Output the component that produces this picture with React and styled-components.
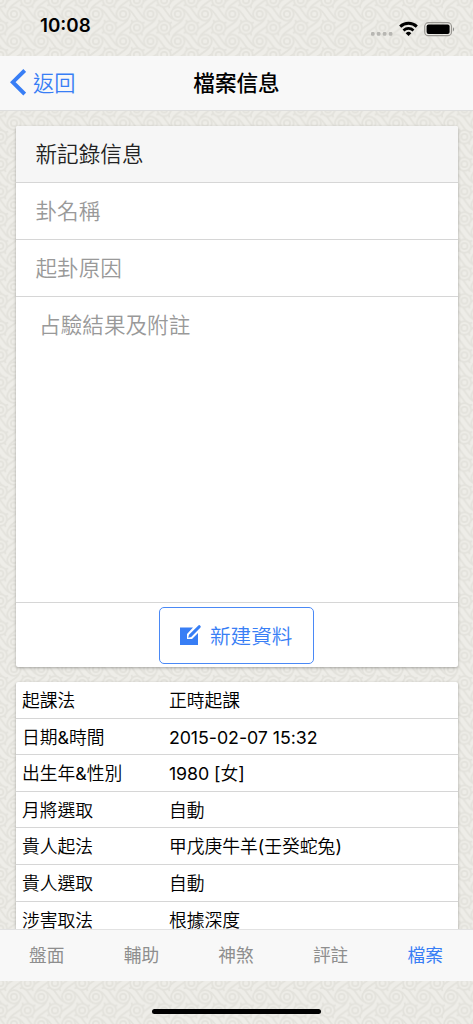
import React from 'react';
import styled, { createGlobalStyle } from 'styled-components';

const Global = createGlobalStyle`
  *{box-sizing:border-box}
  html,body{margin:0;height:100%}
  body{font-family:Inter,"Noto Sans CJK TC",sans-serif;background:#ecebe6;color:#000}
  #root{height:100%}
`;
const Screen = styled.div`
  position:relative;width:100%;height:1024px;overflow:hidden;display:flex;flex-direction:column;
`;
const Backdrop = styled.svg`position:absolute;inset:0;width:100%;height:100%;z-index:-1;`;
const StatusBar = styled.div`
  height:56px;flex:none;display:flex;justify-content:space-between;padding:15px 19px 0 40px;
`;
const Clock = styled.div`font-size:18.8px;line-height:22px;font-weight:600;`;
const StatusIcons = styled.svg`width:86px;height:22px;margin-top:3px;`;
const NavBar = styled.header`
  height:55px;flex:none;background:#f8f8f8;border-bottom:1px solid #dededd;
  display:grid;grid-template-columns:1fr auto 1fr;align-items:center;
`;
const Back = styled.div`
  display:flex;align-items:center;gap:7px;padding-left:10px;color:#387ef5;font-size:21.2px;
  line-height:26px;padding-bottom:2px;
  span{font-weight:350;padding-top:1px}
`;
const Title = styled.h1`margin:0;font-size:21.6px;font-weight:500;line-height:54px;`;
const Content = styled.main`
  flex:1;min-height:0;overflow:hidden;padding:15px 15px 0;display:flex;flex-direction:column;gap:15px;
`;
const Card = styled.section`
  flex:none;background:#fff;border-radius:2px;margin:0 .5px;box-shadow:0 1px 3px rgba(0,0,0,.3);overflow:hidden;
`;
const Field = styled.div`
  height:${p => p.$h || 57}px;border-bottom:1px solid #d6d6d6;padding:0 20px 0 ${p => p.$indent || 20}px;
  font-size:21.6px;line-height:56px;font-weight:350;color:${p => (p.$head ? '#222' : '#999')};
  background:${p => (p.$head ? '#f6f6f6' : '#fff')};
`;
const Actions = styled.div`height:64px;display:flex;justify-content:center;padding-top:4px;`;
const Button = styled.button`
  width:155px;height:57px;border:1px solid #4a89f6;border-radius:5px;background:#fff;color:#387ef5;
  display:flex;align-items:center;gap:8px;padding:0 0 1px 20px;font:350 20.6px Inter,"Noto Sans CJK TC",sans-serif;
`;
const Row = styled.div`
  height:36.6px;border-bottom:1px solid #d6d6d6;display:grid;grid-template-columns:147px 1fr;
  padding:1px 0 0 6.4px;font-size:17.8px;font-weight:350;line-height:35px;white-space:nowrap;
`;
const Latin = styled.span`font-weight:400;letter-spacing:-.05px;`;
const Tabs = styled.nav`
  height:52px;flex:none;background:#f8f8f8;border-top:1px solid #e2e2e2;display:grid;grid-template-columns:repeat(5,1fr);
`;
const Tab = styled.div`
  text-align:center;font-size:17.7px;line-height:51px;padding-right:1px;
  color:${p => (p.$on ? '#387ef5' : '#8e8e8e')};
`;
const Home = styled.footer`height:43px;flex:none;display:flex;justify-content:center;padding-top:28px;`;
const Indicator = styled.div`width:169px;height:5px;border-radius:3px;background:#000;`;

const rows = [
  ['起課法', '正時起課'], ['日期&時間', '2015-02-07 15:32'], ['出生年&性別', '1980 [女]'],
  ['月將選取', '自動'], ['貴人起法', '甲戊庚牛羊(壬癸蛇兔)'], ['貴人選取', '自動'], ['涉害取法', '根據深度'],
];

const T = 27.3;
const H = T / 2;
const centers = [[0, 0], [T, 0], [0, T], [T, T], [H, H]];
const falling = [[H, 0], [H, T]];
const rising = [[0, H], [T, H]];
const wave = 'M-10 -6C-5 -9 -3 -4 0 0S5 9 10 6';

function Waves({ x, y, flip }) {
  return (
    <g transform={`translate(${x} ${y})${flip ? ' rotate(90)' : ''}`}>
      <path d={wave} transform="translate(-2.2 2.2)" />
      <path d={wave} transform="translate(2.2 -2.2)" />
    </g>
  );
}

function Pattern() {
  return (
    <Backdrop aria-hidden="true">
      <defs>
        <pattern id="rings" width={T} height={T} patternUnits="userSpaceOnUse" patternTransform="translate(14 14)">
          <rect width={T} height={T} fill="#eeede8" />
          <g fill="none" stroke="#e3e2dc" strokeWidth="1.7">
            {falling.map(([x, y]) => <Waves key={`f${x}-${y}`} x={x} y={y} />)}
            {rising.map(([x, y]) => <Waves key={`r${x}-${y}`} x={x} y={y} flip />)}
            {centers.map(([x, y]) => (
              <g key={`${x}-${y}`}>
                <circle cx={x} cy={y} r="6.7" fill="#eeede8" />
                <circle cx={x} cy={y} r="3.1" />
              </g>
            ))}
          </g>
        </pattern>
      </defs>
      <rect width="100%" height="100%" fill="url(#rings)" />
    </Backdrop>
  );
}

function Mixed({ text }) {
  return (
    <span>
      {text.split(/([\x20-\x7e]+)/).map((part, i) => (i % 2 ? <Latin key={i}>{part}</Latin> : part))}
    </span>
  );
}

export default function App() {
  return (
    <Screen>
      <Global />
      <Pattern />
      <StatusBar>
        <Clock>10:08</Clock>
        <StatusIcons viewBox="0 0 86 22">
          <g fill="#b7b6b2">
            {[2.2, 8, 14, 20].map(x => <rect key={x} x={x + 0.8} y="14" width="3.6" height="3.8" rx="1.2" />)}
          </g>
          <g fill="none" stroke="#000" strokeWidth="3">
            <path d="M32.2 8.6a12 12 0 0 1 16.6 0" />
            <path d="M35.5 12.4a7.3 7.3 0 0 1 10 0" strokeWidth="2.7" />
          </g>
          <path d="M40.5 18l-2.8-2.8a4 4 0 0 1 5.6 0z" />
          <rect x="56.7" y="4.7" width="26.8" height="13" rx="3.8" fill="none" stroke="#999792" strokeWidth="1.2" />
          <rect x="58.6" y="6.6" width="23" height="9.3" rx="2" />
          <path d="M85 9.2v4.2q1-.5 1-2.1t-1-2.1" fill="#888" />
        </StatusIcons>
      </StatusBar>
      <NavBar>
        <Back>
          <svg width="16" height="27" viewBox="0 0 16 27"><path d="M14.7 1.5L2.8 13.2 14.7 25" fill="none" stroke="#387ef5" strokeWidth="3.9" /></svg>
          <span>返回</span>
        </Back>
        <Title>檔案信息</Title>
      </NavBar>
      <Content>
        <Card>
          <Field $head>新記錄信息</Field>
          <Field>卦名稱</Field>
          <Field>起卦原因</Field>
          <Field $h={306} $indent={23.6}>占驗結果及附註</Field>
          <Actions>
            <Button>
              <svg width="22" height="22" viewBox="0 0 22 22">
                <path d="M0 3.5h13L7 10v5h5l6-6v12H0z" fill="#387ef5" />
                <path d="M8.2 13.8l.8-3L18.1 1.7q1.1-1.2 2.2 0t0 2L11.2 13z" fill="#387ef5" />
              </svg>
              新建資料
            </Button>
          </Actions>
        </Card>
        <Card>
          {rows.map(([k, v]) => <Row key={k}><Mixed text={k} /><Mixed text={v} /></Row>)}
        </Card>
      </Content>
      <Tabs>
        {['盤面', '輔助', '神煞', '評註', '檔案'].map(t => <Tab key={t} $on={t === '檔案'}>{t}</Tab>)}
      </Tabs>
      <Home><Indicator /></Home>
    </Screen>
  );
}
